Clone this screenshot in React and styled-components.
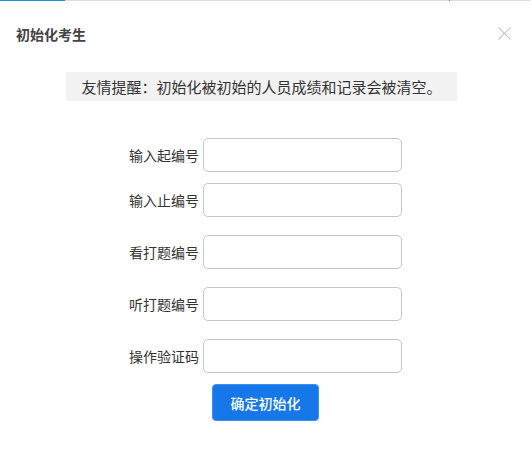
import React from "react";
import styled, { createGlobalStyle } from "styled-components";

const GlobalStyle = createGlobalStyle`
  html, body {
    margin: 0;
    padding: 0;
    background: #fff;
  }
  body {
    font-family: "Microsoft YaHei", "Noto Sans CJK SC", "Noto Sans", sans-serif;
    color: #333;
  }
`;

const Modal = styled.div`
  width: 532px;
  height: 458px;
  background: #fff;
  display: flex;
  flex-direction: column;
`;

const TopStrip = styled.div`
  display: flex;
  height: 1px;
  width: 530px;
  background: #dcdcdc;

  span {
    width: 65px;
    background: #1f8fe6;
  }
  i {
    margin-left: 384px;
    width: 1px;
    background: #8a8a8a;
  }
`;

const Header = styled.div`
  height: 65px;
  padding: 0 21px 0 16px;
  display: flex;
  align-items: center;
  justify-content: space-between;

  h3 {
    margin: 0;
    font-size: 14px;
    font-weight: bold;
    color: #444;
  }
`;

const Close = styled.button`
  border: none;
  background: none;
  padding: 0;
  width: 13px;
  height: 13px;
  display: flex;
  cursor: pointer;
`;

const Notice = styled.div`
  margin: 6px 0 0 66px;
  width: 391px;
  height: 29px;
  line-height: 29px;
  background: #f2f2f2;
  text-align: center;
  font-size: 15px;
  color: #333;
`;

const Form = styled.form`
  display: flex;
  flex-direction: column;
  margin-top: 37px;
`;

const Row = styled.div`
  display: flex;
  align-items: center;
  margin-top: ${(p) => p.$gap || 0}px;
`;

const Label = styled.label`
  width: 199px;
  padding-right: 4px;
  text-align: right;
  font-size: 14px;
  color: #333;
`;

const Input = styled.input`
  box-sizing: border-box;
  width: 199px;
  height: 34px;
  border: 1px solid #c6c6c6;
  border-radius: 5px;
  outline: none;
  padding: 0 8px;
  font-size: 14px;
`;

const Submit = styled.button`
  margin: 11px 0 0 212px;
  width: 107px;
  height: 37px;
  border: 1px solid #3b8ff0;
  border-radius: 4px;
  background: #1677e8;
  color: #fff;
  font-family: inherit;
  font-size: 14px;
  font-weight: 500;
  cursor: pointer;
`;

const fields = [
  { label: "输入起编号", gap: 0 },
  { label: "输入止编号", gap: 11 },
  { label: "看打题编号", gap: 18 },
  { label: "听打题编号", gap: 18 },
  { label: "操作验证码", gap: 18 },
];

export default function App() {
  return (
    <>
      <GlobalStyle />
      <Modal>
        <TopStrip>
          <span />
          <i />
        </TopStrip>
        <Header>
          <h3>初始化考生</h3>
          <Close aria-label="关闭">
            <svg width="13" height="13" viewBox="0 0 13 13">
              <path d="M0.5 0.5 L12.5 12.5 M12.5 0.5 L0.5 12.5" stroke="#c8c8c8" strokeWidth="1.1" fill="none" />
            </svg>
          </Close>
        </Header>
        <Notice>友情提醒：初始化被初始的人员成绩和记录会被清空。</Notice>
        <Form onSubmit={(e) => e.preventDefault()}>
          {fields.map((f) => (
            <Row key={f.label} $gap={f.gap}>
              <Label>{f.label}</Label>
              <Input type="text" />
            </Row>
          ))}
          <div>
            <Submit type="submit">确定初始化</Submit>
          </div>
        </Form>
      </Modal>
    </>
  );
}
